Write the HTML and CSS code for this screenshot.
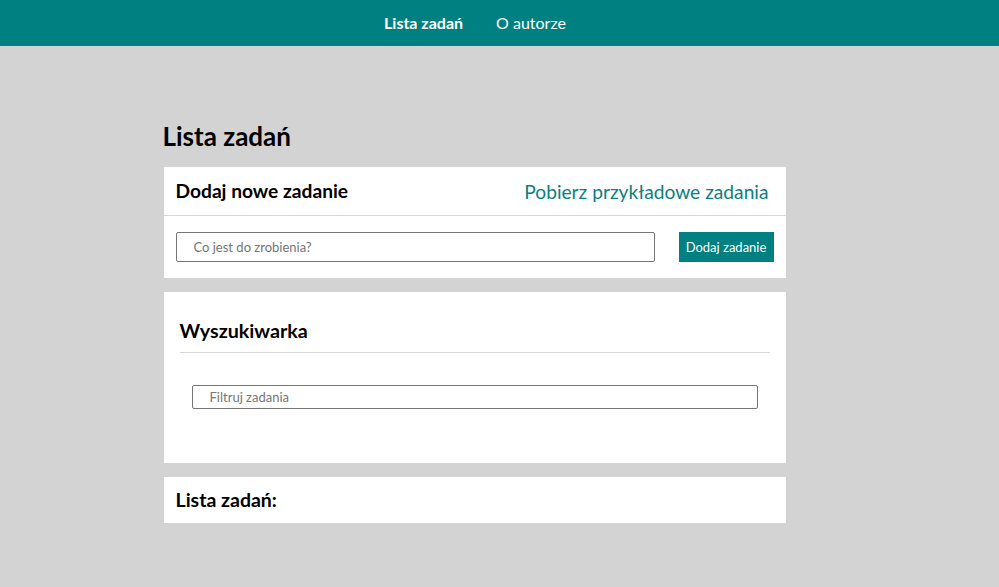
FILE: index.html
```html
<!DOCTYPE html>
<html lang="pl">
<head>
<meta charset="utf-8">
<title>Lista zadań</title>
<link rel="stylesheet" href="styles.css">
</head>
<body>
<nav class="navbar">
  <a class="nav-link active" href="#">Lista zadań</a>
  <a class="nav-link" href="#">O autorze</a>
</nav>
<main class="container">
  <h1 class="page-title">Lista zadań</h1>
  <section class="card">
    <div class="card-header">
      <h2 class="card-title">Dodaj nowe zadanie</h2>
      <a class="fetch-link" href="#">Pobierz przykładowe zadania</a>
    </div>
    <form class="add-form">
      <input class="task-input" type="text" placeholder="Co jest do zrobienia?">
      <button class="add-btn" type="button">Dodaj zadanie</button>
    </form>
  </section>
  <section class="card search-card">
    <h2 class="card-title search-title">Wyszukiwarka</h2>
    <div class="search-body">
      <input class="filter-input" type="text" placeholder="Filtruj zadania">
    </div>
  </section>
  <section class="card list-card">
    <h2 class="card-title list-title">Lista zadań:</h2>
  </section>
</main>
</body>
</html>
```
FILE: styles.css
```css
* { box-sizing: border-box; }
html, body { margin: 0; padding: 0; }
body {
  background: #d3d3d3;
  font-family: Lato, "Open Sans", sans-serif;
  color: #000;
  min-height: 587px;
}
.navbar {
  background: #008080;
  height: 46px;
  display: flex;
  justify-content: center;
  align-items: center;
  padding-right: 49px;
  gap: 33px;
}
.nav-link {
  color: #fff;
  text-decoration: none;
  font-size: 16px;
  line-height: 46px;
}
.nav-link.active { font-weight: 700; }
.container {
  width: 622px;
  margin: 0 auto;
  padding-top: 74px;
  position: relative;
  left: -25px;
}
.page-title {
  margin: 0 0 14px -1px;
  font-size: 26px;
  line-height: 33px;
  font-weight: 700;
}
.card {
  background: #fff;
  margin-bottom: 14px;
}
.card-header {
  display: flex;
  justify-content: space-between;
  align-items: center;
  height: 49px;
  padding: 0 17px 0 12px;
  border-bottom: 1px solid #d6d6d6;
}
.card-title {
  margin: 0;
  font-size: 19.2px;
  line-height: 22px;
  font-weight: 700;
}
.fetch-link {
  color: #0d7e7e;
  text-decoration: none;
  font-size: 19.2px;
}
.add-form {
  display: flex;
  align-items: center;
  padding: 16px 12px;
  gap: 24px;
}
.task-input {
  width: 479px;
  height: 30px;
  border: 1px solid #767676;
  border-radius: 2px;
  padding: 0 17px;
  font-family: Lato, sans-serif;
  font-size: 13px;
  color: #333;
}
.task-input::placeholder, .filter-input::placeholder { color: #757575; }
.add-btn {
  width: 95px;
  height: 30px;
  border: none;
  background: #008080;
  color: #fff;
  font-family: Lato, sans-serif;
  font-size: 13px;
  padding: 0;
}
.search-card {
  height: 171px;
  padding: 28px 16px 0 16px;
}
.search-title {
  font-size: 19.7px;
  padding-bottom: 10px;
  border-bottom: 1px solid #d6d6d6;
}
.search-body {
  padding: 32px 12px 0 12px;
}
.filter-input {
  width: 566px;
  height: 24px;
  border: 1px solid #767676;
  border-radius: 2px;
  padding: 0 17px;
  font-family: Lato, sans-serif;
  font-size: 13px;
}
.list-card {
  height: 46px;
  display: flex;
  align-items: center;
  padding: 0 12px;
}
.list-title { font-size: 19.5px; }
```
